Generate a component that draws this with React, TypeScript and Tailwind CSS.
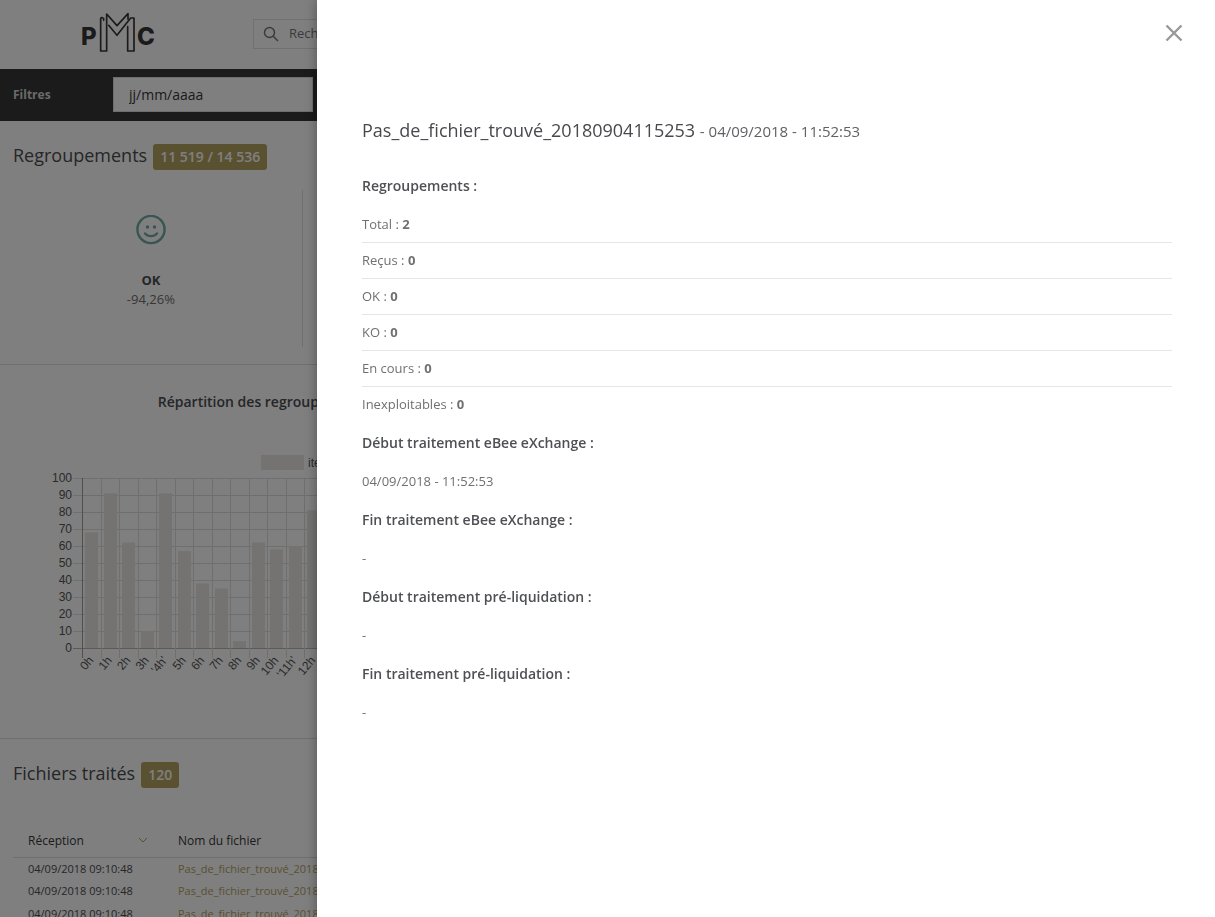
import React from "react";

const summary = [
  { label: "Total", value: 2 },
  { label: "Reçus", value: 0 },
  { label: "OK", value: 0 },
  { label: "KO", value: 0 },
  { label: "En cours", value: 0 },
  { label: "Inexploitables", value: 0 },
];

const steps = [
  { title: "Début traitement eBee eXchange :", value: "04/09/2018 - 11:52:53" },
  { title: "Fin traitement eBee eXchange :", value: "-" },
  { title: "Début traitement pré-liquidation :", value: "-" },
  { title: "Fin traitement pré-liquidation :", value: "-" },
];

const bars = [
  { label: "0h", value: 68 },
  { label: "1h", value: 91 },
  { label: "2h", value: 62 },
  { label: "3h", value: 10 },
  { label: "'4h'", value: 91 },
  { label: "5h", value: 57 },
  { label: "6h", value: 38 },
  { label: "7h", value: 35 },
  { label: "8h", value: 4 },
  { label: "9h", value: 62 },
  { label: "10h", value: 58 },
  { label: "'11h'", value: 60 },
  { label: "12h", value: 81 },
];

const files = [1, 2, 3];

function Logo() {
  return (
    <svg role="img" aria-label="PMC" viewBox="0 0 72 42" className="h-[42px] w-[72px] overflow-visible">
      <g fill="#363636" fontFamily="Inter, sans-serif" fontWeight="800" fontSize="24">
        <text x="-1" y="34">P</text>
        <text x="55" y="34">C</text>
      </g>
      <g transform="translate(-82 -11) scale(0.33333)" fill="none" stroke="#363636" strokeWidth="5" strokeLinejoin="round" strokeLinecap="round">
        <path d="M311 61V56Q306 50 302 55V153H320V42L351 77L384 41V58" />
        <path d="M326 76L351 106L392 54H402V153H383V80" />
      </g>
    </svg>
  );
}

function Chart() {
  return (
    <svg role="img" aria-label="Répartition par heure" viewBox="0 0 547 240" className="h-[240px] w-[547px]" fontFamily="Liberation Sans, sans-serif" fontSize="12" fill="#555">
      <rect x="231" y="5" width="43" height="15" fill="#e8e7e5" />
      <text x="278" y="17">items</text>
      {Array.from({ length: 11 }, (_, i) => (
        <g key={i}>
          <path d={`M43 ${198.5 - i * 17}H497`} stroke={i === 0 ? "#b5b5b5" : "#dedede"} />
          <text x="42" y={202 - i * 17} textAnchor="end">{i * 10}</text>
        </g>
      ))}
      {Array.from({ length: 25 }, (_, i) => (
        <path key={i} d={`M${Math.ceil(52 + i * 18.5) + 0.5} 28V208`} stroke={i === 0 ? "#a0a0a0" : "#dedede"} />
      ))}
      {bars.map((b, i) => (
        <g key={b.label}>
          <rect x={Math.ceil(55 + i * 18.5)} y={198 - b.value * 1.7} width="13" height={b.value * 1.7} fill="#e8e7e5" />
          <text transform={`translate(${61 + i * 18.5} 208) rotate(-50)`} textAnchor="end" y="4">{b.label}</text>
        </g>
      ))}
    </svg>
  );
}

function Badge({ children }: { children: React.ReactNode }) {
  return <span className="rounded-[3px] bg-[#b4a263] px-[7px] text-sm leading-[26px] font-semibold text-white">{children}</span>;
}

function Dashboard() {
  return (
    <div className="text-[#4b4c50]">
      <header className="flex h-[69px] items-center pb-[2px] pl-[82px]">
        <div className="w-[171px] pb-1"><Logo /></div>
        <label className="flex h-[30px] w-[300px] items-center gap-[10px] border border-[#e2e2e2] pl-[9px]">
          <svg viewBox="0 0 16 16" className="size-4 shrink-0" fill="none" stroke="#777" strokeWidth="1.5">
            <circle cx="6.5" cy="6.5" r="5" />
            <path d="M10.2 10.2L15 15" />
          </svg>
          <input type="search" aria-label="Rechercher" placeholder="Rechercher" className="w-full text-[13px] outline-none placeholder:text-[#777]" />
        </label>
      </header>

      <div className="flex h-[52px] items-center bg-[#363636] px-[13px] pb-[2px]">
        <label htmlFor="date" className="w-[100px] pt-[2px] text-xs leading-5 font-bold text-[#d5d5d5]">Filtres</label>
        <input id="date" type="text" placeholder="jj/mm/aaaa" className="h-[35px] w-[200px] border border-[#dcdcdc] bg-white px-[15px] text-sm outline-none placeholder:text-[#363636]" />
      </div>

      <section className="h-[244px] border-b border-[#dedede] pt-[23px]">
        <h2 className="flex items-start gap-[6px] px-[13px] text-lg leading-[23px]">Regroupements <Badge>11 519 / 14 536</Badge></h2>
        <div className="mt-5 grid grid-cols-4 pr-1">
          <div className="flex h-[157px] flex-col items-center border-r border-[#dedede] pt-[25px] text-[13px]">
            <svg viewBox="0 0 30 30" className="size-[30px]" fill="none" stroke="#72aaa2" strokeWidth="2.4" strokeLinecap="round">
              <circle cx="15" cy="14.5" r="13.6" />
              <path d="M9 18.5C12 22 18 22 21 18.5" />
              <circle cx="11.5" cy="12" r="1.7" fill="#72aaa2" stroke="none" />
              <circle cx="18.5" cy="12" r="1.7" fill="#72aaa2" stroke="none" />
            </svg>
            <strong className="mt-[26px] leading-[19px]">OK</strong>
            <span className="leading-[19px] text-[#6e6e70]">-94,26%</span>
          </div>
        </div>
      </section>

      <section className="grid h-[374px] grid-cols-2 border-b border-[#dedede] pt-[26px]">
        <div>
          <h3 className="pr-[10px] text-center text-sm leading-[22px] font-semibold">Répartition des regroupements par heure</h3>
          <div className="px-[30px] pt-[37px]"><Chart /></div>
        </div>
      </section>

      <section className="px-[13px] pt-[23px]">
        <h2 className="flex items-start gap-[6px] text-lg leading-[23px]">Fichiers traités <Badge>120</Badge></h2>
        <table className="mt-9 w-full table-fixed text-left">
          <thead>
            <tr className="h-[33px] border-b border-[#dedede] text-xs text-[#363636]">
              <th className="w-[150px] px-[15px] pt-[2px] font-normal">
                <span className="flex items-center justify-between">
                  Réception
                  <svg viewBox="0 0 10 6" className="mb-[2px] h-[6px] w-[10px]" fill="none" stroke="#b4a263"><path d="M1 1L5 5L9 1" /></svg>
                </span>
              </th>
              <th className="px-[15px] pt-[2px] font-normal">Nom du fichier</th>
            </tr>
          </thead>
          <tbody className="text-[11px]">
            {files.map((n) => (
              <tr key={n} className="h-[23px]">
                <td className="px-[15px]">04/09/2018 09:10:48</td>
                <td className="px-[15px]"><a href="#fichier" className="text-[#b4a263]">Pas_de_fichier_trouvé_20180904091048</a></td>
              </tr>
            ))}
          </tbody>
        </table>
      </section>
    </div>
  );
}

function Drawer() {
  return (
    <aside role="dialog" aria-label="Détail du fichier" className="fixed inset-y-0 right-0 left-[317px] overflow-y-auto bg-white pr-[43px] pl-[45px] text-[#6f7073] shadow-[0_0_12px_rgba(0,0,0,0.35)]">
      <div className="-mr-3 flex justify-end pt-[23px]">
        <button type="button" aria-label="Fermer" className="size-5 text-[#999]">
          <svg viewBox="0 0 20 20" fill="none" stroke="currentColor" strokeWidth="2.4"><path d="M2.5 2.5L17.5 17.5M17.5 2.5L2.5 17.5" /></svg>
        </button>
      </div>
      <h1 className="mt-[73px] text-lg leading-7 text-[#48494d]">
        Pas_de_fichier_trouvé_20180904115253 <small className="text-[15px] text-[#606165]">- 04/09/2018 - 11:52:53</small>
      </h1>
      <h2 className="mt-[31px] text-sm leading-5 font-semibold text-[#4f5054]">Regroupements :</h2>
      <ul className="mt-[11px] text-[13px]">
        {summary.map((s) => (
          <li key={s.label} className="h-9 border-b border-[#e6e6e6] leading-[35px] last:border-b-0">
            {s.label} : <strong>{s.value}</strong>
          </li>
        ))}
      </ul>
      {steps.map((s) => (
        <section key={s.title} className="h-[77px] pt-[10px]">
          <h2 className="text-sm leading-5 font-semibold text-[#4f5054]">{s.title}</h2>
          <p className="mt-[18px] text-[13px] leading-5">{s.value}</p>
        </section>
      ))}
    </aside>
  );
}

export default function App() {
  return (
    <div className="h-screen overflow-hidden bg-white font-['Open_Sans',sans-serif]">
      <Dashboard />
      <div className="fixed inset-0 bg-black/50" />
      <Drawer />
    </div>
  );
}
